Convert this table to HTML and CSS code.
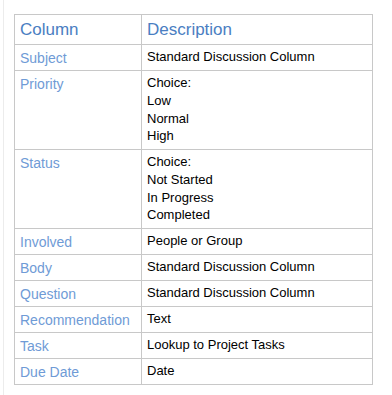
FILE: index.html
```html
<!DOCTYPE html>
<html lang="en">
<head>
  <meta charset="UTF-8">
  <meta name="viewport" content="width=device-width, initial-scale=1.0">
  <title>Discussion Columns</title>
  <link rel="stylesheet" href="styles.css">
</head>
<body>
  <div class="page">
    <table class="columns">
      <thead>
        <tr>
          <th class="col-name">Column</th>
          <th class="col-desc">Description</th>
        </tr>
      </thead>
      <tbody>
        <tr>
          <td class="name">Subject</td>
          <td>Standard Discussion Column</td>
        </tr>
        <tr>
          <td class="name">Priority</td>
          <td>Choice:<br>Low<br>Normal<br>High</td>
        </tr>
        <tr>
          <td class="name">Status</td>
          <td>Choice:<br>Not Started<br>In Progress<br>Completed</td>
        </tr>
        <tr>
          <td class="name">Involved</td>
          <td>People or Group</td>
        </tr>
        <tr>
          <td class="name">Body</td>
          <td>Standard Discussion Column</td>
        </tr>
        <tr>
          <td class="name">Question</td>
          <td>Standard Discussion Column</td>
        </tr>
        <tr>
          <td class="name">Recommendation</td>
          <td>Text</td>
        </tr>
        <tr>
          <td class="name">Task</td>
          <td>Lookup to Project Tasks</td>
        </tr>
        <tr>
          <td class="name">Due Date</td>
          <td>Date</td>
        </tr>
      </tbody>
    </table>
  </div>
</body>
</html>
```

FILE: styles.css
```css
body {
  margin: 0;
  background: #fff;
  font-family: "Liberation Sans", Arial, sans-serif;
}

.page {
  margin-left: 3px;
  min-height: 100vh;
  box-sizing: border-box;
  border-left: 1px solid #ececec;
  padding: 14px 0 0 10px;
}

.columns {
  border-collapse: collapse;
  table-layout: fixed;
  width: 359px;
}

.columns th,
.columns td {
  border: 1px solid #c8c8c8;
  text-align: left;
  vertical-align: top;
  padding: 3px 4px 4px 5px;
}

.columns th {
  font-weight: normal;
  font-size: 17px;
  line-height: 22px;
  color: #4a7ec2;
  padding-top: 4px;
  padding-bottom: 3px;
}

.col-name {
  width: 117px;
}

.columns td {
  font-size: 13px;
  line-height: 17.75px;
  color: #000;
}

.columns td.name {
  font-size: 14px;
  line-height: 18px;
  color: #6f9bd6;
  padding-top: 4px;
  padding-bottom: 3px;
}
```
